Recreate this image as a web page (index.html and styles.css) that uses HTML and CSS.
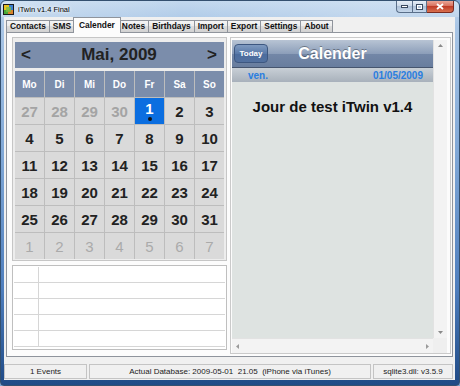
FILE: index.html
```html
<!DOCTYPE html>
<html lang="fr">
<head>
  <meta charset="UTF-8" />
  <title>iTwin v1.4 Final</title>
  <link rel="stylesheet" href="styles.css">
</head>
<body>

  <div class="window">
    <div class="titlebar">
      <svg class="app-icon" width="11" height="11" viewBox="0 0 11 11">
        <rect x="0.5" y="0.5" width="10" height="10" fill="#2c3a2a" stroke="#1a1a1a"/>
        <rect x="1" y="1" width="5" height="5" fill="#e8c020"/>
        <rect x="6" y="1" width="4" height="5" fill="#3b7fd0"/>
        <rect x="1" y="6" width="4" height="4" fill="#4aa838"/>
        <rect x="5" y="6" width="5" height="4" fill="#d8822a"/>
        <rect x="3" y="3" width="5" height="5" fill="#7ac040" opacity="0.8"/>
      </svg>
      <span class="title">iTwin v1.4 Final</span>
      <div class="controls">
        <div class="ctl ctl-min">
          <svg width="7" height="3" viewBox="0 0 7 3"><rect x="0.5" y="0.5" width="6" height="2" fill="#fff" stroke="#3a4a60"/></svg>
        </div>
        <div class="ctl ctl-max">
          <svg width="7" height="6" viewBox="0 0 7 6"><rect x="0.5" y="0.5" width="6" height="5" fill="none" stroke="#3a4a60"/><rect x="1.5" y="1.5" width="4" height="3" fill="none" stroke="#fff"/></svg>
        </div>
        <div class="ctl ctl-close">
          <svg width="8" height="7" viewBox="0 0 8 7"><path d="M1 1 L7 6 M7 1 L1 6" stroke="#fff" stroke-width="1.8"/></svg>
        </div>
      </div>
    </div>

    <div class="frame-body">
      <div class="client">
        <div class="tabs">
          <div class="tab">Contacts</div>
          <div class="tab">SMS</div>
          <div class="tab tab-active">Calender</div>
          <div class="tab">Notes</div>
          <div class="tab">Birthdays</div>
          <div class="tab">Import</div>
          <div class="tab">Export</div>
          <div class="tab">Settings</div>
          <div class="tab">About</div>
        </div>

        <div class="page">
          <div class="left">
            <div class="cal">
              <div class="cal-head">
                <span>&lt;</span>
                <span>Mai, 2009</span>
                <span>&gt;</span>
              </div>
              <div class="cal-grid">
                <div class="dn">Mo</div><div class="dn">Di</div><div class="dn">Mi</div><div class="dn">Do</div><div class="dn">Fr</div><div class="dn">Sa</div><div class="dn">So</div>

                <div class="d d-out">27</div><div class="d d-out">28</div><div class="d d-out">29</div><div class="d d-out">30</div>
                <div class="d d-sel"><span>1</span><span class="mark"></span></div>
                <div class="d">2</div><div class="d">3</div>

                <div class="d">4</div><div class="d">5</div><div class="d">6</div><div class="d">7</div><div class="d">8</div><div class="d">9</div><div class="d">10</div>
                <div class="d">11</div><div class="d">12</div><div class="d">13</div><div class="d">14</div><div class="d">15</div><div class="d">16</div><div class="d">17</div>
                <div class="d">18</div><div class="d">19</div><div class="d">20</div><div class="d">21</div><div class="d">22</div><div class="d">23</div><div class="d">24</div>
                <div class="d">25</div><div class="d">26</div><div class="d">27</div><div class="d">28</div><div class="d">29</div><div class="d">30</div><div class="d">31</div>

                <div class="d d-out d-next">1</div><div class="d d-out d-next">2</div><div class="d d-out d-next">3</div><div class="d d-out d-next">4</div><div class="d d-out d-next">5</div><div class="d d-out d-next">6</div><div class="d d-out d-next">7</div>
              </div>
            </div>

            <div class="events">
              <div class="ev-row"><div></div><div></div></div>
              <div class="ev-row"><div></div><div></div></div>
              <div class="ev-row"><div></div><div></div></div>
              <div class="ev-row"><div></div><div></div></div>
              <div class="ev-row"><div></div><div></div></div>
            </div>
          </div>

          <div class="right">
            <div class="browser">
              <div class="view">
                <div class="view-head">
                  <button class="today" type="button">Today</button>
                  <span class="view-title">Calender</span>
                  <span></span>
                </div>
                <div class="view-sub">
                  <span>ven.</span>
                  <span>01/05/2009</span>
                </div>
                <div class="view-body">Jour de test iTwin v1.4</div>
              </div>
              <div class="vscroll">
                <svg width="5" height="3" viewBox="0 0 5 3"><path d="M0 3 L2.5 0 L5 3 Z" fill="#8a8a8a"/></svg>
                <svg width="5" height="3" viewBox="0 0 5 3"><path d="M0 0 L5 0 L2.5 3 Z" fill="#8a8a8a"/></svg>
              </div>
              <div class="hscroll">
                <svg width="3" height="5" viewBox="0 0 3 5"><path d="M3 0 L3 5 L0 2.5 Z" fill="#9a9a9a"/></svg>
                <svg width="3" height="5" viewBox="0 0 3 5"><path d="M0 0 L3 2.5 L0 5 Z" fill="#9a9a9a"/></svg>
              </div>
              <div class="corner"></div>
            </div>
          </div>
        </div>

        <div class="status">
          <div class="sp sp-events">1 Events</div>
          <div class="sp sp-db">Actual Database: 2009-05-01  21.05  (iPhone via iTunes)</div>
          <div class="sp sp-dll">sqlite3.dll: v3.5.9</div>
        </div>
      </div>
    </div>
  </div>

</body>
</html>
```

FILE: styles.css
```css
* {
  box-sizing: border-box;
}

body {
  margin: 0;
  font-family: "Liberation Sans", Arial, sans-serif;
  background-color: #7ea7d6;
}

/* window frame */
.window {
  width: 460px;
  height: 386px;
  display: flex;
  flex-direction: column;
  border: 1px solid #34506f;
  border-radius: 6px 6px 4px 4px;
  background: linear-gradient(to bottom, #c2d8ee 0, #a9c6e6 24px, #7fa7d6 40%, #4e7ebd 75%, #1f4a86 100%);
  overflow: hidden;
}

.titlebar {
  height: 16px;
  display: flex;
  align-items: center;
  padding: 0 5px 0 2px;
  background: linear-gradient(to right, rgba(255,255,255,0.25), rgba(255,255,255,0) 40%, rgba(255,255,255,0.2) 80%);
}

.app-icon {
  flex-shrink: 0;
}

.title {
  margin-left: 4px;
  font-size: 7.5px;
  color: #000;
  text-shadow: 0 0 3px #fff, 0 0 5px rgba(255,255,255,0.9);
}

.controls {
  margin-left: auto;
  align-self: flex-start;
  display: flex;
  height: 12px;
}

.ctl {
  width: 16px;
  border: 1px solid #5a6f8a;
  border-top: 0;
  background: linear-gradient(#e6eef7, #c9d7e7 50%, #aec1d8 50%, #c6d8ec);
  display: flex;
  align-items: center;
  justify-content: center;
}

.ctl-min {
  border-radius: 0 0 0 4px;
  border-right: 0;
}

.ctl-max {
  width: 15px;
}

.ctl-close {
  width: 27px;
  border-left: 0;
  border-color: #7a2a20;
  border-radius: 0 0 4px 0;
  background: linear-gradient(#eba596, #d66c58 50%, #c03c28 50%, #d8704e);
}

.frame-body {
  flex: 1;
  display: flex;
  padding: 0 4px 5px 3px;
}

.client {
  flex: 1;
  display: flex;
  flex-direction: column;
  background-color: #f0f0f0;
}

/* tabs */
.tabs {
  height: 15px;
  display: flex;
  align-items: flex-end;
  padding-left: 2px;
}

.tab {
  height: 12px;
  padding: 0 3px;
  border: 1px solid #8f949c;
  border-bottom: 0;
  border-left-width: 0;
  background: linear-gradient(#f5f5f5, #ebebeb 50%, #dddddd 50%, #d2d2d2);
  font-size: 8.4px;
  font-weight: bold;
  line-height: 11px;
  color: #111;
  white-space: nowrap;
}

.tab:first-child {
  border-left-width: 1px;
}

.tab-active {
  position: relative;
  height: 16px;
  margin: 0 -2px -1px;
  padding: 0 5px;
  border-left-width: 1px;
  background: #fcfcfc;
  line-height: 14px;
}

.page {
  margin: 0 2px;
  border: 1px solid #8f949c;
  background-color: #fcfcfc;
  padding: 4px 1px 2px 5px;
  display: flex;
  gap: 3px;
}

/* calendar */
.left {
  width: 215px;
  display: flex;
  flex-direction: column;
  gap: 4px;
  padding-bottom: 4px;
}

.cal {
  height: 224px;
  border: 1px solid #c6c6c6;
  background-color: #ededed;
  padding: 4px 2px 1px;
}

.cal-head {
  height: 26px;
  display: flex;
  align-items: center;
  justify-content: space-between;
  padding: 0 7px 0 6px;
  background-color: #7b8dab;
  font-size: 17px;
  font-weight: bold;
  color: #222;
}

.cal-grid {
  margin-top: 3px;
  display: grid;
  grid-template-columns: repeat(7, 29px);
  grid-auto-rows: 26px;
  gap: 1px;
  background-color: #bdbdbd;
}

.dn {
  display: flex;
  align-items: center;
  justify-content: center;
  background-color: #7b8dab;
  color: #fff;
  font-size: 10px;
  font-weight: bold;
}

.d {
  display: flex;
  align-items: center;
  justify-content: center;
  background-color: #dadada;
  font-size: 15px;
  font-weight: bold;
  color: #222;
}

.d-out {
  color: #a4a4a4;
}

.d-next {
  font-weight: normal;
  color: #aaaaaa;
}

.d-sel {
  flex-direction: column;
  background-color: #0b6ee0;
  color: #fff;
  line-height: 15px;
  padding-bottom: 1px;
}

.mark {
  width: 4px;
  height: 4px;
  margin-top: 1px;
  border-radius: 50%;
  background-color: #111;
}

.events {
  height: 85px;
  border: 1px solid #bfbfbf;
  background-color: #fff;
  padding: 1px;
}

.ev-row {
  display: grid;
  grid-template-columns: 25px 1fr;
  height: 16px;
  border-bottom: 1px solid #d6d6d6;
}

.ev-row > div:first-child {
  border-right: 1px solid #d6d6d6;
}

/* day view */
.right {
  flex: 1;
  display: flex;
  border: 1px solid #cacaca;
  padding: 2px 3px 0 1px;
}

.browser {
  flex: 1;
  display: grid;
  grid-template-columns: 1fr 14px;
  grid-template-rows: 1fr 15px;
}

.view {
  display: flex;
  flex-direction: column;
  background-color: #dee3e1;
}

.view-head {
  height: 28px;
  display: grid;
  grid-template-columns: 1fr auto 1fr;
  align-items: center;
  background: linear-gradient(#b8c4d4, #8d9fba 50%, #7387a7 51%, #687d9e);
  border-bottom: 1px solid #46556e;
}

.today {
  justify-self: start;
  margin-left: 2px;
  width: 34px;
  height: 19px;
  padding: 0;
  border: 1px solid #3d5780;
  border-radius: 4px;
  background: linear-gradient(#7f9ac0, #5a7aa9 50%, #4b6c9e 51%, #53719f);
  color: #fff;
  font-family: "Liberation Sans", Arial, sans-serif;
  font-size: 8px;
  font-weight: bold;
}

.view-title {
  color: #fff;
  font-size: 16px;
  font-weight: bold;
  text-shadow: 0 -1px 0 rgba(0,0,0,0.35);
}

.view-sub {
  height: 14px;
  display: flex;
  justify-content: space-between;
  align-items: center;
  padding: 0 10px 0 16px;
  background: linear-gradient(#c8cfd6, #a8b1bb);
  font-size: 10px;
  font-weight: bold;
  color: #2a7ee0;
}

.view-body {
  flex: 1;
  padding-top: 16px;
  text-align: center;
  font-size: 15px;
  font-weight: bold;
  color: #111;
}

.vscroll {
  display: flex;
  flex-direction: column;
  justify-content: space-between;
  align-items: center;
  padding: 4px 0;
  background-color: #f3f3f3;
  border-left: 1px solid #e2e2e2;
}

.hscroll {
  display: flex;
  justify-content: space-between;
  align-items: center;
  padding: 0 4px;
  background-color: #f3f3f3;
  border-top: 1px solid #e2e2e2;
}

.corner {
  background-color: #efefef;
}

/* status bar */
.status {
  flex: 1;
  display: flex;
  gap: 2px;
  padding: 7px 2px 1px 0;
}

.sp {
  border: 1px solid #c4c4c4;
  font-size: 8px;
  color: #222;
  text-align: center;
  line-height: 13px;
  white-space: pre;
}

.sp-events {
  width: 83px;
}

.sp-db {
  flex: 1;
}

.sp-dll {
  width: 80px;
}
```
